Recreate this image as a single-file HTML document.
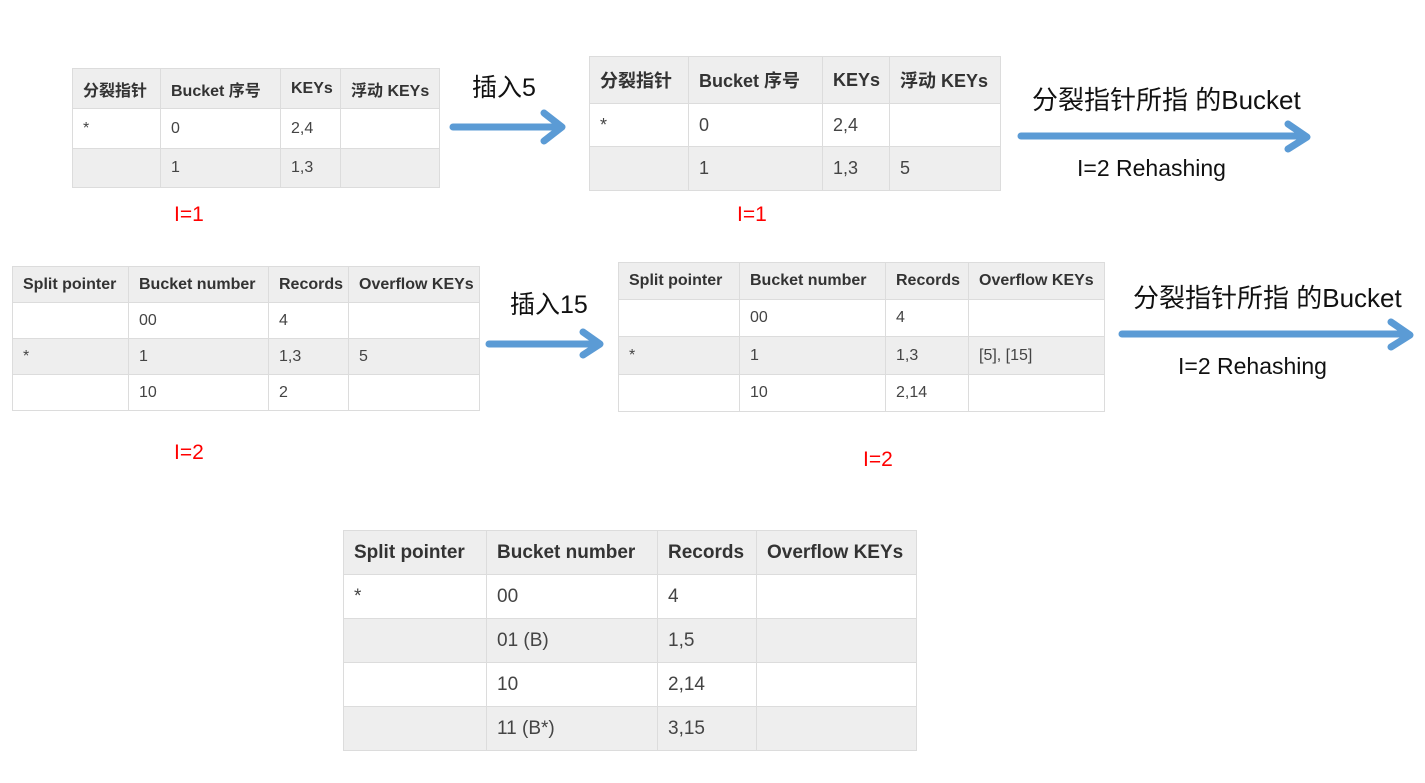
<!DOCTYPE html>
<html><head><meta charset="utf-8"><style>
body{margin:0;width:1425px;height:783px;background:#fff;position:relative;overflow:hidden;font-family:"Liberation Sans","Noto Sans CJK SC",sans-serif;color:#333}
table{position:absolute;border-collapse:collapse;table-layout:fixed}
td,th{border:1px solid #dcdcdc;padding:0 0 0 10px;text-align:left;white-space:nowrap;overflow:hidden}
th{font-weight:bold;color:#333}
tr.g{background:#eeeeee}
tr.w{background:#fff}
td{color:#444}
.t{position:absolute;white-space:nowrap;color:#111;font-family:"Liberation Sans","Noto Sans CJK SC",sans-serif}
.r{position:absolute;color:#f00;font-size:21px}
svg{position:absolute;left:0;top:0}
</style></head><body>

<table style="left:72px;top:68px;font-size:16px">
<colgroup><col style="width:88px"><col style="width:120px"><col style="width:60px"><col style="width:99px"></colgroup>
<tr class="g" style="height:40px"><th>分裂指针</th><th>Bucket 序号</th><th>KEYs</th><th>浮动 KEYs</th></tr>
<tr class="w" style="height:40px"><td>*</td><td>0</td><td>2,4</td><td></td></tr>
<tr class="g" style="height:39px"><td></td><td>1</td><td>1,3</td><td></td></tr>
</table>

<table style="left:589px;top:56px;font-size:18px">
<colgroup><col style="width:99px"><col style="width:134px"><col style="width:67px"><col style="width:111px"></colgroup>
<tr class="g" style="height:47px"><th>分裂指针</th><th>Bucket 序号</th><th>KEYs</th><th>浮动 KEYs</th></tr>
<tr class="w" style="height:43px"><td>*</td><td>0</td><td>2,4</td><td></td></tr>
<tr class="g" style="height:44px"><td></td><td>1</td><td>1,3</td><td>5</td></tr>
</table>

<table style="left:12px;top:266px;font-size:16px">
<colgroup><col style="width:116px"><col style="width:140px"><col style="width:80px"><col style="width:131px"></colgroup>
<tr class="g" style="height:36px"><th>Split pointer</th><th>Bucket number</th><th>Records</th><th>Overflow KEYs</th></tr>
<tr class="w" style="height:36px"><td></td><td>00</td><td>4</td><td></td></tr>
<tr class="g" style="height:36px"><td>*</td><td>1</td><td>1,3</td><td>5</td></tr>
<tr class="w" style="height:36px"><td></td><td>10</td><td>2</td><td></td></tr>
</table>

<table style="left:618px;top:262px;font-size:16px">
<colgroup><col style="width:121px"><col style="width:146px"><col style="width:83px"><col style="width:136px"></colgroup>
<tr class="g" style="height:37px"><th>Split pointer</th><th>Bucket number</th><th>Records</th><th>Overflow KEYs</th></tr>
<tr class="w" style="height:37px"><td></td><td>00</td><td>4</td><td></td></tr>
<tr class="g" style="height:38px"><td>*</td><td>1</td><td>1,3</td><td>[5], [15]</td></tr>
<tr class="w" style="height:37px"><td></td><td>10</td><td>2,14</td><td></td></tr>
</table>

<table style="left:343px;top:530px;font-size:19px">
<colgroup><col style="width:143px"><col style="width:171px"><col style="width:99px"><col style="width:160px"></colgroup>
<tr class="g" style="height:44px"><th>Split pointer</th><th>Bucket number</th><th>Records</th><th>Overflow KEYs</th></tr>
<tr class="w" style="height:44px"><td>*</td><td>00</td><td>4</td><td></td></tr>
<tr class="g" style="height:44px"><td></td><td>01 (B)</td><td>1,5</td><td></td></tr>
<tr class="w" style="height:44px"><td></td><td>10</td><td>2,14</td><td></td></tr>
<tr class="g" style="height:44px"><td></td><td>11 (B*)</td><td>3,15</td><td></td></tr>
</table>

<svg width="1425" height="783">
<g stroke="#5b9bd5" stroke-width="7" fill="none" stroke-linecap="round" stroke-linejoin="round">
<path d="M453 127H558M544 113L562 127L544 141"/>
<path d="M1021 136H1302M1288 124L1307 137L1288 149"/>
<path d="M489 344H596M583 332L600 344L583 355"/>
<path d="M1122 334H1405M1391 322L1410 335L1391 347"/>
</g>
</svg>

<div class="t" style="left:472px;top:68px;font-size:25px">插入5</div>
<div class="t" style="left:1032px;top:80px;font-size:26px">分裂指针所指 的Bucket</div>
<div class="t" style="left:1077px;top:155px;font-size:23px">I=2 Rehashing</div>
<div class="t" style="left:510px;top:285px;font-size:25px">插入15</div>
<div class="t" style="left:1133px;top:278px;font-size:26px">分裂指针所指 的Bucket</div>
<div class="t" style="left:1178px;top:353px;font-size:23px">I=2 Rehashing</div>
<div class="r" style="left:174px;top:203px">I=1</div>
<div class="r" style="left:737px;top:203px">I=1</div>
<div class="r" style="left:174px;top:441px">I=2</div>
<div class="r" style="left:863px;top:448px">I=2</div>
</body></html>
